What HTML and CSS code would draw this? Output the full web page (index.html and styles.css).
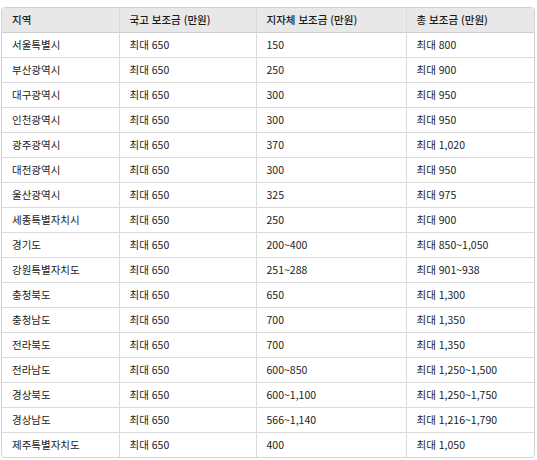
FILE: index.html
```html
<!DOCTYPE html>
<html lang="ko">
<head>
<meta charset="utf-8">
<link rel="stylesheet" href="styles.css">
</head>
<body>
<div class="wrap">
<table class="grid">
<colgroup><col class="c1"><col class="c2"><col class="c3"><col class="c4"></colgroup>
<thead>
<tr><th>지역</th><th>국고 보조금 (만원)</th><th>지자체 보조금 (만원)</th><th>총 보조금 (만원)</th></tr>
</thead>
<tbody>
<tr><td>서울특별시</td><td>최대 650</td><td>150</td><td>최대 800</td></tr>
<tr><td>부산광역시</td><td>최대 650</td><td>250</td><td>최대 900</td></tr>
<tr><td>대구광역시</td><td>최대 650</td><td>300</td><td>최대 950</td></tr>
<tr><td>인천광역시</td><td>최대 650</td><td>300</td><td>최대 950</td></tr>
<tr><td>광주광역시</td><td>최대 650</td><td>370</td><td>최대 1,020</td></tr>
<tr><td>대전광역시</td><td>최대 650</td><td>300</td><td>최대 950</td></tr>
<tr><td>울산광역시</td><td>최대 650</td><td>325</td><td>최대 975</td></tr>
<tr><td>세종특별자치시</td><td>최대 650</td><td>250</td><td>최대 900</td></tr>
<tr><td>경기도</td><td>최대 650</td><td>200~400</td><td>최대 850~1,050</td></tr>
<tr><td>강원특별자치도</td><td>최대 650</td><td>251~288</td><td>최대 901~938</td></tr>
<tr><td>충청북도</td><td>최대 650</td><td>650</td><td>최대 1,300</td></tr>
<tr><td>충청남도</td><td>최대 650</td><td>700</td><td>최대 1,350</td></tr>
<tr><td>전라북도</td><td>최대 650</td><td>700</td><td>최대 1,350</td></tr>
<tr><td>전라남도</td><td>최대 650</td><td>600~850</td><td>최대 1,250~1,500</td></tr>
<tr><td>경상북도</td><td>최대 650</td><td>600~1,100</td><td>최대 1,250~1,750</td></tr>
<tr><td>경상남도</td><td>최대 650</td><td>566~1,140</td><td>최대 1,216~1,790</td></tr>
<tr><td>제주특별자치도</td><td>최대 650</td><td>400</td><td>최대 1,050</td></tr>
</tbody>
</table>
</div>
</body>
</html>
```
FILE: styles.css
```css
html, body {
  margin: 0;
  padding: 0;
  background: #ffffff;
}
body {
  font-family: "Noto Sans CJK KR", "Noto Sans", sans-serif;
  font-size: 10.5px;
  color: #222222;
}
.wrap {
  margin: 7px 2px 0 1px;
  border: 1px solid #d2d2d2;
  border-radius: 4px;
  overflow: hidden;
}
.grid {
  width: 100%;
  border-collapse: collapse;
  table-layout: fixed;
}
.c1 { width: 117px; }
.c2 { width: 137px; }
.c3 { width: 150px; }
.c4 { width: 128px; }
.grid th,
.grid td {
  height: 24px;
  padding: 0 0 0 10px;
  text-align: left;
  font-weight: normal;
  border-right: 1px solid #dcdcdc;
  border-bottom: 1px solid #dcdcdc;
  white-space: nowrap;
  line-height: 14px;
}
.grid th {
  background: #e8e8e8;
  border-bottom-color: #cfcfcf;
  color: #1a1a1a;
  font-weight: 500;
}
.grid th:last-child,
.grid td:last-child {
  border-right: none;
}
.grid tbody tr:last-child td {
  border-bottom: none;
}
```
